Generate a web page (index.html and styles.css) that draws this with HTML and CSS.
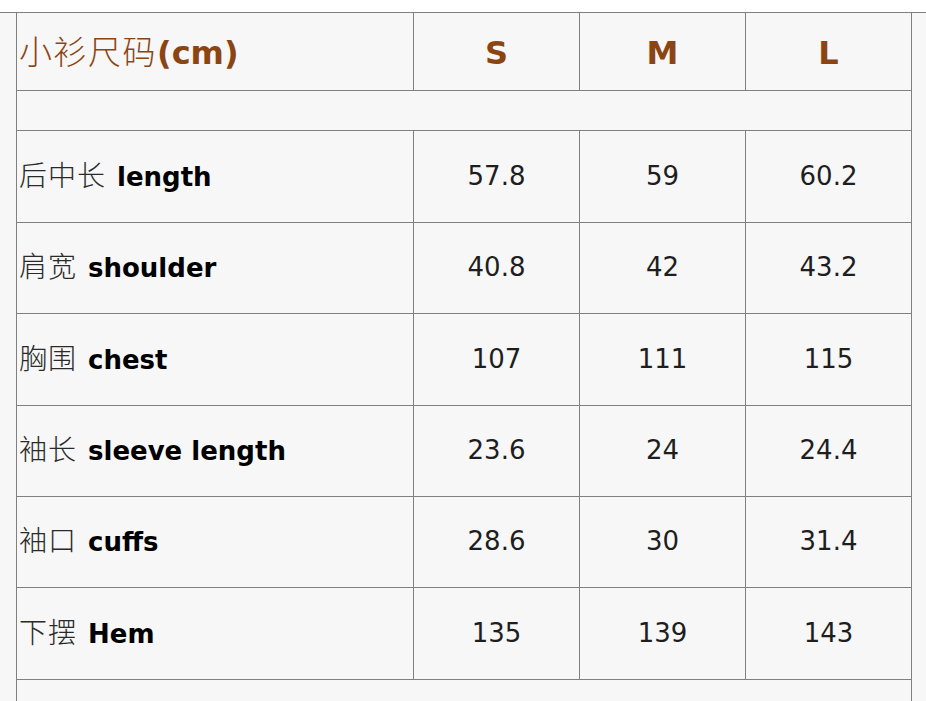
FILE: index.html
```html
<!DOCTYPE html>
<html lang="zh">
<head>
<meta charset="utf-8">
<title>小衫尺码</title>
<link rel="stylesheet" href="styles.css">
</head>
<body>
<div class="page">
  <table class="size">
    <colgroup>
      <col class="c-name">
      <col class="c-size">
      <col class="c-size">
      <col class="c-size">
    </colgroup>
    <thead>
      <tr class="head">
        <th class="name"><span class="zh">小衫尺码</span><b>(cm)</b></th>
        <th>S</th>
        <th>M</th>
        <th>L</th>
      </tr>
    </thead>
    <tbody>
      <tr class="gap"><td colspan="4"></td></tr>
      <tr class="row tall"><td class="name"><span class="zh">后中长</span><b>length</b></td><td>57.8</td><td>59</td><td>60.2</td></tr>
      <tr class="row"><td class="name"><span class="zh">肩宽</span><b>shoulder</b></td><td>40.8</td><td>42</td><td>43.2</td></tr>
      <tr class="row tall"><td class="name"><span class="zh">胸围</span><b>chest</b></td><td>107</td><td>111</td><td>115</td></tr>
      <tr class="row"><td class="name"><span class="zh">袖长</span><b>sleeve length</b></td><td>23.6</td><td>24</td><td>24.4</td></tr>
      <tr class="row"><td class="name"><span class="zh">袖口</span><b>cuffs</b></td><td>28.6</td><td>30</td><td>31.4</td></tr>
      <tr class="row tall"><td class="name"><span class="zh">下摆</span><b>Hem</b></td><td>135</td><td>139</td><td>143</td></tr>
      <tr class="gap"><td colspan="4"></td></tr>
    </tbody>
  </table>
</div>
</body>
</html>
```

FILE: styles.css
```css
html, body {
  margin: 0;
  background: #ffffff;
}

.page {
  margin-top: 12px;
  border-top: 1px solid #808080;
  background: #f7f7f7;
  min-height: 688px;
  padding-left: 16px;
}

.size {
  border-collapse: collapse;
  table-layout: fixed;
  width: 896px;
  font-family: "DejaVu Sans", "Noto Sans CJK SC", sans-serif;
}

.c-name { width: 397px; }
.c-size { width: 166px; }

.size th,
.size td {
  border: 1px solid #808080;
  padding: 0;
  text-align: center;
  vertical-align: middle;
  font-size: 26px;
  font-weight: normal;
  line-height: 1.2;
  color: #1e1e1e;
}

.size thead th {
  border-top: none;
  height: 74px;
  padding-top: 3px;
  font-size: 32px;
  font-weight: bold;
  color: #8b4513;
}

.size .name {
  text-align: left;
  padding-left: 2px;
  white-space: nowrap;
}

.zh {
  font-family: "Noto Sans CJK SC", sans-serif;
  font-weight: 300;
  font-size: 28px;
  line-height: 1;
  letter-spacing: 1px;
  color: #2a2a2a;
  margin-right: 11px;
}

.size thead .zh {
  font-size: 33px;
  letter-spacing: 1.5px;
  color: #8b4513;
  margin-right: 0;
}

.size .name b {
  font-weight: bold;
  line-height: 1;
  color: #000;
}

.size thead .name b {
  color: #8b4513;
}

.gap td {
  height: 39px;
}

.row td {
  height: 90px;
}

.row.tall td {
  height: 91px;
}
```
